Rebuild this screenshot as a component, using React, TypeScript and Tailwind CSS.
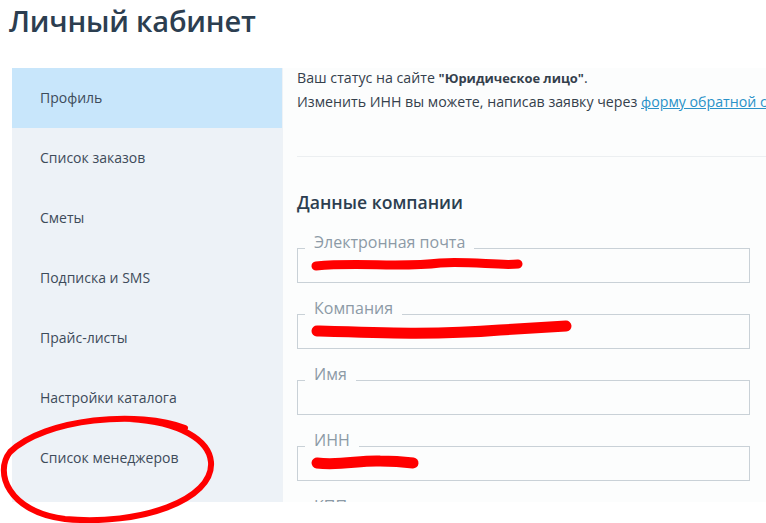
import React from "react";

const menu = [
  "Профиль",
  "Список заказов",
  "Сметы",
  "Подписка и SMS",
  "Прайс-листы",
  "Настройки каталога",
  "Список менеджеров",
];

const fields = ["Электронная почта", "Компания", "Имя", "ИНН", "КПП"];

function Field({ label }: { label: string }) {
  return (
    <div className="mt-[17px] first:mt-0">
      <div className="relative w-fit ml-[8px] px-[9px] bg-[#fcfdfd] text-[16px] leading-[16px] text-[#8c9aa6]">
        {label}
      </div>
      <div className="-mt-[2px] h-[35px] border border-[#c9d1d7]" />
    </div>
  );
}

export default function App() {
  return (
    <div
      className="relative w-[766px] h-[523px] overflow-hidden bg-white text-[#34495e]"
      style={{ fontFamily: '"Open Sans", "Noto Sans", sans-serif' }}
    >
      <h1 className="pl-[9px] pt-[1px] text-[29px] leading-[40px] font-semibold text-[#2c3e50] tracking-[-0.2px]">
        Личный кабинет
      </h1>

      <div className="flex mt-[27px] ml-[12px] h-[434px]">
        {/* Sidebar */}
        <nav className="w-[270px] bg-[#edf2f7] shrink-0">
          {menu.map((item, i) => (
            <div
              key={item}
              className={[
                "h-[60px] flex items-center pl-[28px] pb-[1px] text-[14px] text-[#3d4b5a]",
                i === 0 ? "bg-[#c8e6fb]" : "",
              ].join(" ")}
            >
              {item}
            </div>
          ))}
        </nav>

        {/* Content */}
        <main className="flex-1 min-w-0 overflow-hidden bg-[#fcfdfd] border-l border-[#eef2f6] pl-[14px] pr-[16px]">
          <div className="-mt-[2px] text-[14.2px] leading-[23px] text-[#34404c] whitespace-nowrap">
            <p>
              Ваш статус на сайте <b className="font-bold text-[12.9px]">"Юридическое лицо"</b>.
            </p>
            <p>
              Изменить ИНН вы можете, написав заявку через{" "}
              <a className="text-[#2a92c8] underline">формy обратной связи</a>
            </p>
          </div>
          <div className="border-t border-[#eceff1] mt-[43px] -mr-[16px]" />
          <h2 className="mt-[33px] text-[17.6px] leading-[24px] font-semibold text-[#2c3e50]">Данные компании</h2>
          <div className="mt-[20px]">
            {fields.map((f) => (
              <Field key={f} label={f} />
            ))}
          </div>
        </main>
      </div>

      {/* red marker annotations */}
      <svg className="absolute inset-0 pointer-events-none" width="766" height="523" viewBox="0 0 766 523">
        <g fill="none" stroke="#ff0000" strokeLinecap="round" strokeLinejoin="round">
          <path d="M316 266 C360 262 400 268 440 263 C470 261 500 266 518 264" strokeWidth="9" />
          <path d="M317 331 C380 333 440 335 500 330 C530 328 550 327 566 326" strokeWidth="11" />
          <path d="M317 463 C340 466 360 460 380 461 C395 461 405 462 413 463" strokeWidth="11" />
          <path
            d="M185 428 C140 410 45 418 10 452 C-6 472 8 512 65 519 C140 526 214 500 211 462 C209 440 180 422 130 419"
            strokeWidth="6"
          />
        </g>
      </svg>
    </div>
  );
}
